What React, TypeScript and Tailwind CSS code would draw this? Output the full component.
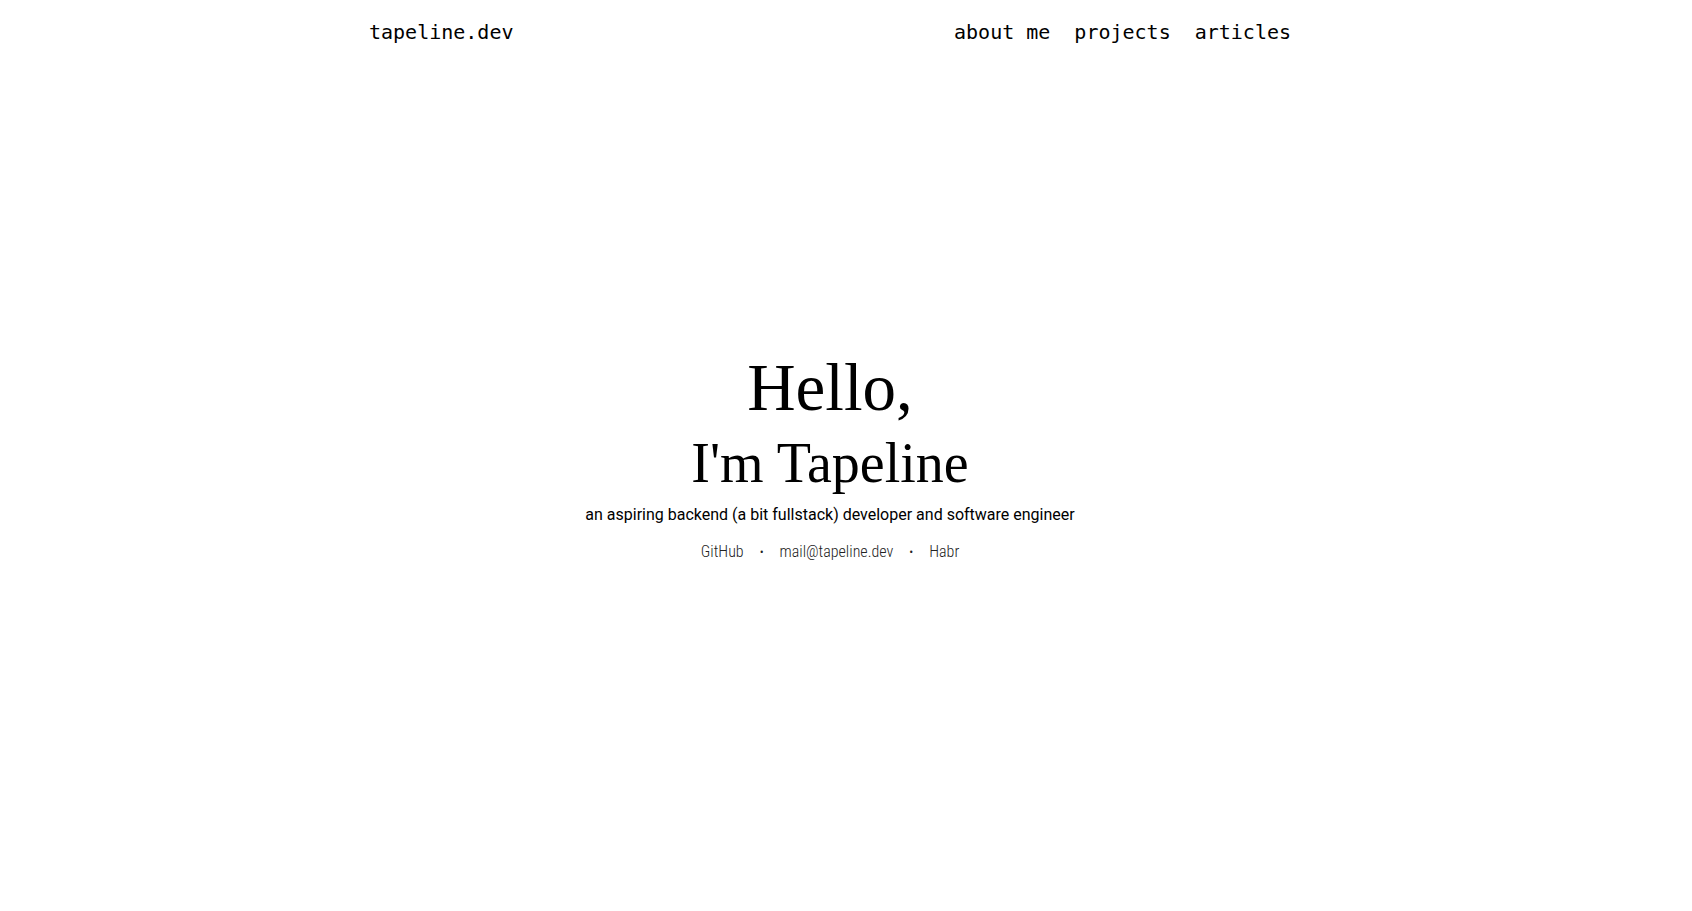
export default function App() {
  const links = ['GitHub', 'mail@tapeline.dev', 'Habr'];

  return (
    <div className="min-h-screen bg-white pr-8 text-black">
      {/* Header */}
      <header className="mx-auto flex w-[922px] items-start justify-between pt-[22px] font-['DejaVu_Sans_Mono',monospace] text-[20px] leading-none">
        <a href="#">tapeline.dev</a>
        <nav className="flex gap-6">
          <a href="#">about me</a>
          <a href="#">projects</a>
          <a href="#">articles</a>
        </nav>
      </header>

      {/* Hero */}
      <main className="flex flex-col items-center pt-[312px] text-center">
        <h1 className="font-['Liberation_Serif',serif] text-[67px] font-normal leading-none">Hello,</h1>
        <h2 className="mt-[14px] font-['Liberation_Serif',serif] text-[56px] font-normal leading-none">I'm Tapeline</h2>
        <p className="mt-4 font-['Roboto',sans-serif] text-[16px] leading-none">
          an aspiring backend (a bit fullstack) developer and software engineer
        </p>
        <div className="mt-[21px] flex items-center gap-4 font-['Roboto_Condensed','Liberation_Sans_Narrow',sans-serif] text-[16px] font-light leading-none text-[#222]">
          {links.map((l, i) => (
            <span key={l} className="flex items-center gap-4">
              {i > 0 && <span className="text-[12px]">•</span>}
              <a href="#">{l}</a>
            </span>
          ))}
        </div>
      </main>
    </div>
  );
}
